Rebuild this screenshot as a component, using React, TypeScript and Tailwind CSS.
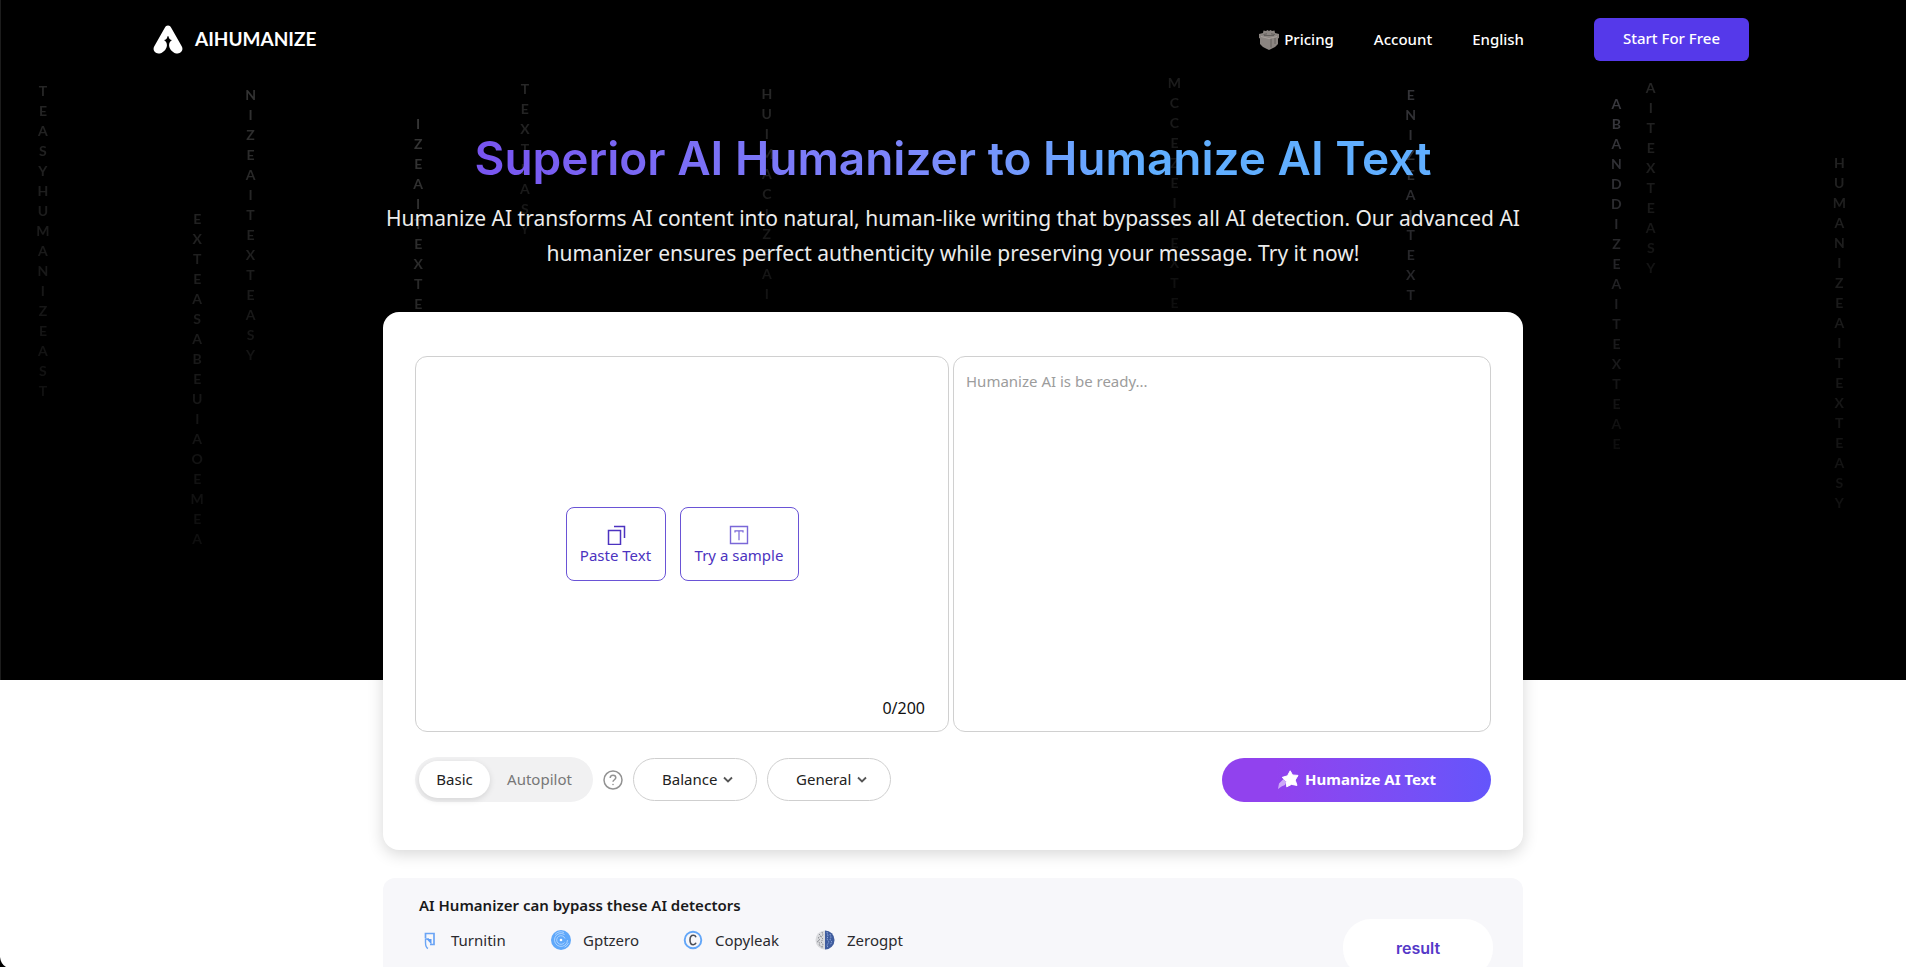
import React from "react";

type Column = { place: string; tone: string; text: string };

const columns: Column[] = [
  { place: "left-[2.2%] top-[81px]", tone: "from-[#262626] to-[#101010]", text: "TEASYHUMANIZEAST" },
  { place: "left-[10.3%] top-[209px]", tone: "from-[#222] to-[#0e0e0e]", text: "EXTEASABEUIAOEMEA" },
  { place: "left-[13.1%] top-[85px]", tone: "from-[#343434] to-[#121212]", text: "NIZEAITEXTEASY" },
  { place: "left-[21.9%] top-[114px]", tone: "from-[#363636] to-[#282828]", text: "IZEAITEXTE" },
  { place: "left-[27.5%] top-[79px]", tone: "from-[#282828] to-[#141414]", text: "TEXTEASY" },
  { place: "left-[40.2%] top-[84px]", tone: "from-[#282828] to-[#121212]", text: "HUIMACIZEAI" },
  { place: "left-[61.6%] top-[73px]", tone: "from-[#1c1c1c] to-[#0e0e0e]", text: "MCCEZEITEXTE" },
  { place: "left-[74%] top-[85px]", tone: "from-[#343438] to-[#232326]", text: "ENIZEAITEXT" },
  { place: "left-[84.8%] top-[94px]", tone: "from-[#3a3a40] to-[#0d0d0d]", text: "ABANDDIZEAITEXTEAE" },
  { place: "left-[86.6%] top-[78px]", tone: "from-[#262626] to-[#121212]", text: "AITEXTEASY" },
  { place: "left-[96.5%] top-[153px]", tone: "from-[#222] to-[#111]", text: "HUMANIZEAITEXTEASY" },
];

function LetterRain() {
  return (
    <div aria-hidden="true" className="pointer-events-none absolute inset-0 overflow-hidden">
      {columns.map((c) => (
        <div
          key={c.place}
          className={`absolute flex w-4 -translate-x-1/2 flex-col items-center bg-linear-to-b bg-clip-text font-['Lato','Noto_Sans',sans-serif] text-[14px] font-bold leading-5 text-transparent ${c.place} ${c.tone}`}
        >
          {c.text.split("").map((letter, i) => (
            <span key={i}>{letter}</span>
          ))}
        </div>
      ))}
    </div>
  );
}

function LogoMark() {
  return (
    <svg viewBox="0 0 30 30" className="h-[30px] w-[30px]" fill="#fff" aria-hidden="true">
      <path d="M15 .5c1.500 0 2.400.8 3.200 2.200l10.500 18.500c2 3.600-.4 7.300-4 7.300-4.500 0-8.200-3.900-8.600-7.800-.1-2.200.3-4 2.900-5.700-2-.1-3-1.100-3.500-3.700h-1c-.5 2.600-1.500 3.600-3.500 3.700 2.600 1.700 3 3.500 2.900 5.700-.4 3.900-4.100 7.800-8.600 7.800-3.600 0-6-3.700-4-7.300L11.800 2.700C12.600 1.300 13.500.5 15 .5z" />
    </svg>
  );
}

function GiftIcon() {
  return (
    <svg viewBox="0 0 22 22" className="h-[22px] w-[22px]" aria-hidden="true">
      <path d="M1 5l4-1L5.500 1.500 8 2l1.500-1L11 2l1.500-1L14 2l2.500-.5L17 4 21 5v4l-1 .5V15l-3 3-6 3-6-3-3-3V9.500L1 9z" fill="#8b8581" />
      <path d="M5.500 5.500 9 4.800M13 4.800l4 .7M6 6.500h10M13 9.500v9M17 9v6" stroke="#625e5b" fill="none" />
      <path d="M3 7.500l8 2 8-2" stroke="#a8a19c" fill="none" />
    </svg>
  );
}

function PasteIcon() {
  return (
    <svg viewBox="0 0 20 20" className="h-5 w-5" fill="none" stroke="currentColor" strokeWidth="1.500" aria-hidden="true">
      <path d="M2.500 5.500h12v14h-12z" />
      <path d="M8 1.500h10.500V13" />
    </svg>
  );
}

function SampleIcon() {
  return (
    <svg viewBox="0 0 20 20" className="h-5 w-5" fill="none" stroke="#7a67d8" aria-hidden="true">
      <path d="M1.500 1.500h17v17h-17z" strokeWidth="1.400" />
      <path d="M6 7.500V5.800h8v1.700M10 5.800v9.400" strokeWidth="1.200" />
    </svg>
  );
}

function ShootingStar() {
  return (
    <svg viewBox="0 0 22 20" className="h-5 w-[22px]" aria-hidden="true">
      <path d="M6.500 9 2 13.500 1 19l3.500-2.500L8 15l1.500-3z" fill="#fff" opacity=".55" />
      <path d="M13.200.8l2.300 4.200 5.500.4-2.800 4.700 1.800 5.300-5.500-1-4.800 2.400-.3-5.500L5.200 7.400l5.300-1.600z" fill="#fff" stroke="#fff" strokeWidth="1" strokeLinejoin="round" />
    </svg>
  );
}

function TurnitinIcon() {
  return (
    <svg viewBox="0 0 20 20" className="h-5 w-5" fill="none" stroke="#6ba5f5" aria-hidden="true">
      <path d="M6.500 8V3.500H15v11h-4" strokeWidth="1.700" />
      <path d="M6.500 12.500V9H10M6.500 12.500c0 3 .5 5 2.500 6" strokeWidth="1.400" />
      <path d="M7.500 9h5v5.500z" fill="#5c9cf6" stroke="none" />
    </svg>
  );
}

function GptzeroIcon() {
  return (
    <svg viewBox="0 0 20 20" className="h-5 w-5" fill="none" stroke="#bcdcff" strokeWidth=".8" aria-hidden="true">
      <circle cx="10" cy="10" r="10" fill="#5fa8fa" stroke="none" />
      <path d="M16.500 10a6.500 6.500 0 1 1-3-5.500" />
      <path d="M13.500 12.500a4.300 4.300 0 1 1 .5-4" />
      <path d="M4 4.500a8 8 0 0 1 9-2M17.500 13a8 8 0 0 1-4 4.200" />
      <circle cx="10" cy="10" r="1.300" fill="#fff" stroke="none" />
    </svg>
  );
}

function CopyleakIcon() {
  return (
    <svg viewBox="0 0 20 20" className="h-5 w-5" fill="none" aria-hidden="true">
      <circle cx="10" cy="10" r="8.300" stroke="#62a6f8" strokeWidth="1.900" />
      <path d="M13 7.200C12.500 5.900 11.600 5.300 10.300 5.300 8.300 5.300 7 7.200 7 10s1.300 4.700 3.300 4.700c1.300 0 2.200-.6 2.700-1.900" stroke="#4a4d55" strokeWidth="1.600" />
    </svg>
  );
}

function ZerogptIcon() {
  return (
    <svg viewBox="0 0 20 20" className="h-5 w-5" fill="none" aria-hidden="true">
      <circle cx="10" cy="10" r="9.500" fill="#d9dadd" />
      <path d="M10 .5a9.500 9.500 0 0 1 0 19z" fill="#3f5c9e" />
      <path d="M4 4l2 2-3 2 2 2-3 1.500 3 1.500-1 2 3 2M7 2l1 3-2 2 2 2-2 3 2 2-1 4" stroke="#8d8f95" strokeDasharray="1.500 1" />
      <path d="M12 2l1 4-1 3 2 3-2 3 1 3M15 4l1 3-1 3 2 2-2 3" stroke="#8fa9dc" strokeDasharray="1.500 1" />
    </svg>
  );
}

function PillSelect({ label, options }: { label: string; options: string[] }) {
  return (
    <div className="relative">
      <select
        aria-label={label}
        className="h-[43px] w-[124px] appearance-none rounded-full border border-[#cfcfcf] bg-white pl-7 pr-8 text-[15px] text-[#222]"
      >
        {options.map((o) => (
          <option key={o}>{o}</option>
        ))}
      </select>
      <svg viewBox="0 0 10 8" className="pointer-events-none absolute right-6 top-[18px] h-2 w-2.5" fill="none" stroke="#555" strokeWidth="1.800" aria-hidden="true">
        <path d="M1 1.500l4 4 4-4" />
      </svg>
    </div>
  );
}

const detectors = [
  { name: "Turnitin", Icon: TurnitinIcon },
  { name: "Gptzero", Icon: GptzeroIcon },
  { name: "Copyleak", Icon: CopyleakIcon },
  { name: "Zerogpt", Icon: ZerogptIcon },
];

export default function App() {
  const [mode, setMode] = React.useState("Basic");
  const on = "bg-white text-[#222] shadow-[0_2px_6px_rgba(0,0,0,0.12)]";
  const off = "text-[#777]";
  const actionClass =
    "pointer-events-auto flex h-[74px] flex-col items-center justify-center rounded-lg border border-[#6a54d6] bg-white pt-0.5 text-[15px] leading-5 text-[#4c33c0]";

  return (
    <div className="relative min-h-screen overflow-hidden bg-white font-['Noto_Sans',sans-serif]">
      <div className="absolute inset-x-0 top-0 h-[680px] border-l border-[#1c1c1c] bg-black">
        <LetterRain />
      </div>

      <div className="relative">
        <header className="mx-auto flex h-[79px] max-w-[1600px] items-center justify-between pr-1">
          <a href="#home" className="flex items-center gap-3 font-['Lato',sans-serif] text-[19px] font-bold text-white">
            <LogoMark />
            AIHUMANIZE
          </a>
          <div className="flex items-center">
            <nav className="mr-[70px] flex items-center gap-10 text-[15px] font-medium text-white">
              <a href="#pricing" className="flex items-center gap-1">
                <GiftIcon />
                Pricing
              </a>
              <a href="#account">Account</a>
              <a href="#language">English</a>
            </nav>
            <button type="button" className="h-[43px] w-[155px] rounded-md bg-[#5539ea] pb-0.5 text-[15px] font-medium text-white">
              Start For Free
            </button>
          </div>
        </header>

        <main className="mx-auto max-w-[1140px]">
          <h1 className="mt-[49px] text-center font-['Inter',sans-serif] text-[46px] font-semibold leading-[60px]">
            <span className="bg-linear-to-r from-[#7854f0] via-[#7c86fb] via-45% to-[#60aeff] to-70% bg-clip-text text-transparent">
              Superior AI Humanizer to Humanize AI Text
            </span>
          </h1>
          <p className="mt-[13px] text-center text-[21px] leading-[35px] text-[#ececec]">
            Humanize AI transforms AI content into natural, human-like writing that bypasses all AI detection. Our advanced AI
            humanizer ensures perfect authenticity while preserving your message. Try it now!
          </p>

          <section className="mt-[41px] rounded-2xl bg-white px-8 pb-12 pt-11 shadow-[0_4px_16px_rgba(0,0,0,0.16)]">
            <div className="grid grid-cols-[534fr_538fr] gap-1">
              <div className="relative h-[376px]">
                <textarea
                  aria-label="Your text"
                  className="block h-full w-full resize-none rounded-xl border border-[#d0d0d0] p-3 text-[15px] outline-none"
                />
                <div className="pointer-events-none absolute inset-0 flex items-center justify-center gap-3.5">
                  <button type="button" className={`${actionClass} w-[100px]`}>
                    <PasteIcon />
                    Paste Text
                  </button>
                  <button type="button" className={`${actionClass} w-[119px]`}>
                    <SampleIcon />
                    Try a sample
                  </button>
                </div>
                <span className="absolute bottom-3 right-6 text-[16px] leading-6 text-[#111]">0/200</span>
              </div>
              <textarea
                readOnly
                aria-label="Humanized text"
                placeholder="Humanize AI is be ready..."
                className="block h-[376px] w-full resize-none rounded-xl border border-[#d0d0d0] p-3 text-[15px] leading-6 outline-none placeholder:text-[#9c9c9c]"
              />
            </div>

            <div className="mt-[25px] flex h-[45px] items-center justify-between">
              <div className="flex items-center gap-2.5">
                <div className="flex h-[45px] w-[178px] items-center rounded-full bg-[#f1f1f2] px-1 text-[15px]">
                  <button
                    type="button"
                    aria-pressed={mode === "Basic"}
                    onClick={() => setMode("Basic")}
                    className={`h-[37px] w-[71px] rounded-full ${mode === "Basic" ? on : off}`}
                  >
                    Basic
                  </button>
                  <button
                    type="button"
                    aria-pressed={mode === "Autopilot"}
                    onClick={() => setMode("Autopilot")}
                    className={`h-[37px] flex-1 rounded-full ${mode === "Autopilot" ? on : off}`}
                  >
                    Autopilot
                  </button>
                </div>
                <button type="button" aria-label="Help">
                  <svg viewBox="0 0 20 20" className="h-5 w-5" fill="none" stroke="#929292" strokeWidth="1.500" aria-hidden="true">
                    <circle cx="10" cy="10" r="9" />
                    <path d="M7.200 8c0-1.700 1.200-2.800 2.800-2.800s2.800 1 2.800 2.600c0 1.900-2.800 2-2.800 4" />
                    <circle cx="10" cy="14.500" r=".8" fill="#929292" stroke="none" />
                  </svg>
                </button>
                <PillSelect label="Strength" options={["Balance", "Enhanced"]} />
                <PillSelect label="Purpose" options={["General", "Essay"]} />
              </div>
              <button
                type="button"
                className="flex h-[44px] w-[269px] items-center justify-center gap-1.5 rounded-full bg-linear-to-r from-[#9142ee] from-20% to-[#6455fb] text-[15px] font-bold text-white"
              >
                <ShootingStar />
                Humanize AI Text
              </button>
            </div>
          </section>

          <section className="mt-7 flex justify-between rounded-xl bg-[#f7f7fa] pb-6 pl-9 pr-[30px] pt-[15px]">
            <div>
              <h2 className="text-[15px] font-semibold leading-6 text-[#1a1a1a]">AI Humanizer can bypass these AI detectors</h2>
              <ul className="mt-[11px] flex text-[15px] leading-6 text-[#2a2a2e]">
                {detectors.map(({ name, Icon }) => (
                  <li key={name} className="flex w-[132px] items-center gap-3">
                    <Icon />
                    {name}
                  </li>
                ))}
              </ul>
            </div>
            <button
              type="button"
              className="mt-[26px] h-[58px] w-[150px] rounded-[28px] bg-white font-['Inter',sans-serif] text-[16px] font-semibold text-[#5539c8]"
            >
              result
            </button>
          </section>
        </main>
      </div>

      <svg viewBox="0 0 6 10" className="fixed bottom-0 left-0 h-2.5 w-1.5" aria-hidden="true">
        <path d="M0 0c.5 4.500 2.500 8 6 10H0z" fill="#000" />
      </svg>
    </div>
  );
}
